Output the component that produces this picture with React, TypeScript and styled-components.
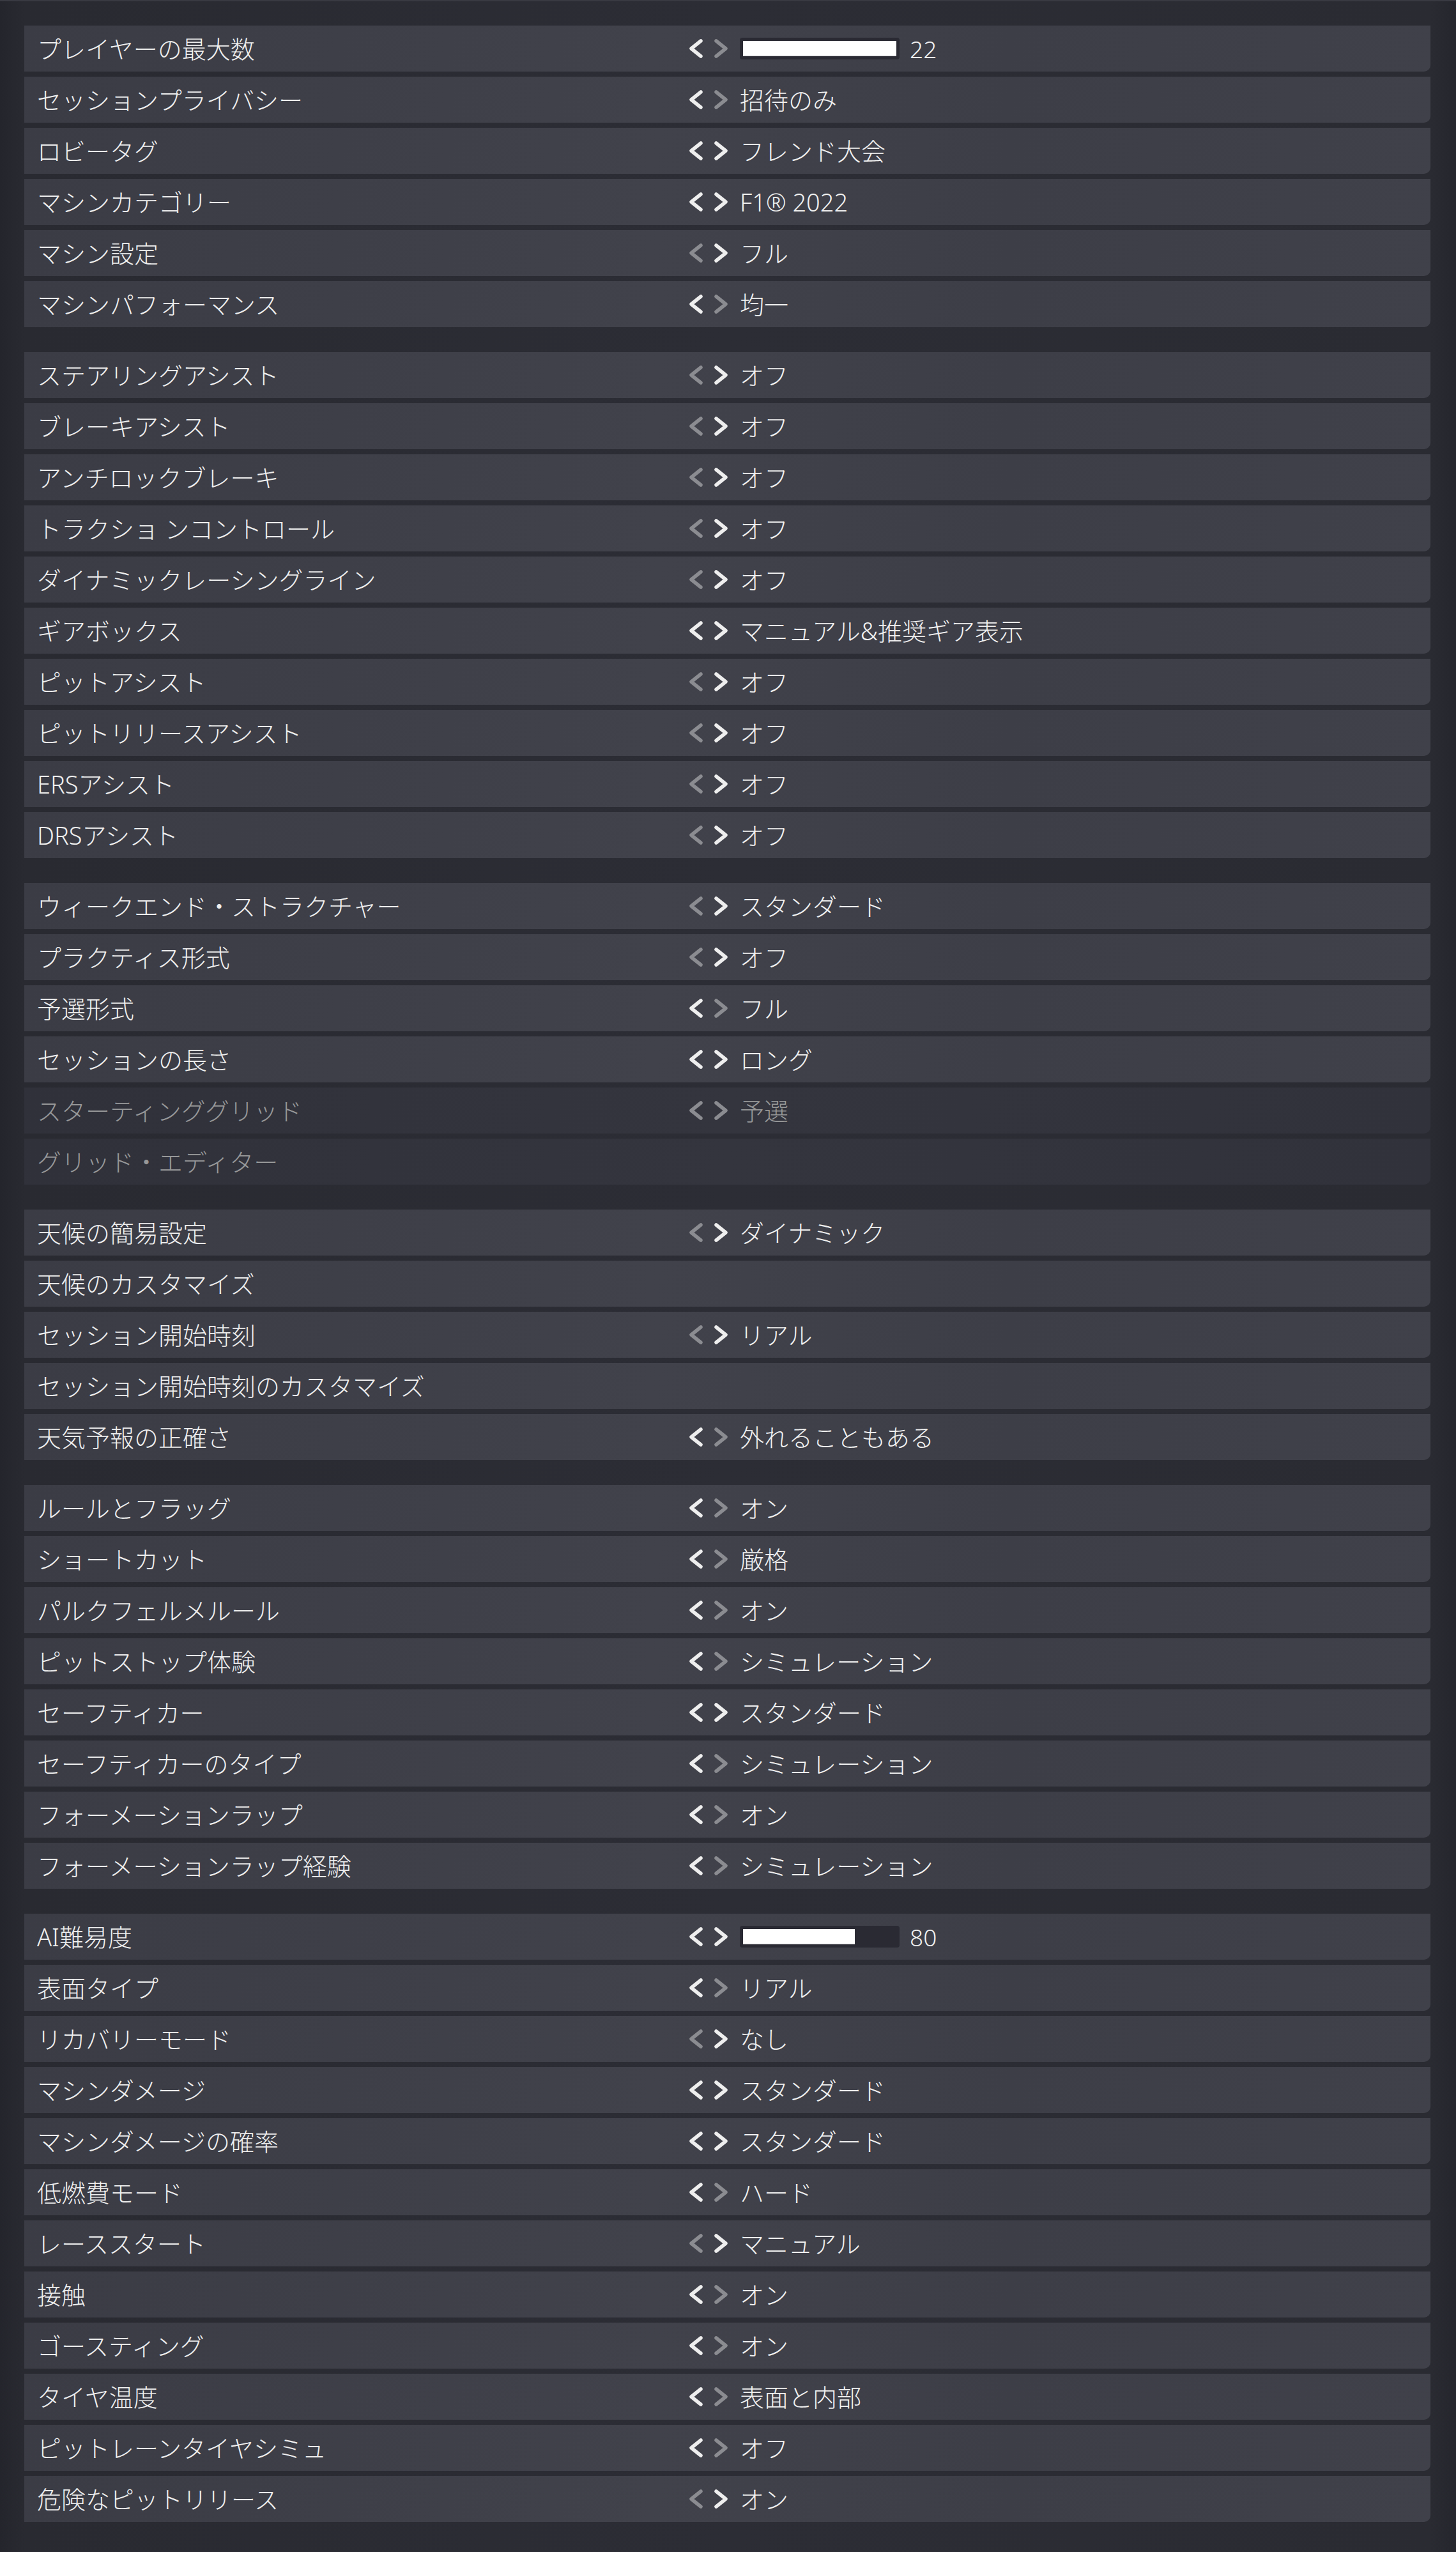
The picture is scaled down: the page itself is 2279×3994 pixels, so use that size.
import React from "react";
import styled, { createGlobalStyle } from "styled-components";

// page wide defaults
const GlobalStyle = createGlobalStyle`
  html, body {
    margin: 0;
    padding: 0;
  }
  body {
    min-height: 100vh;
    background: linear-gradient(90deg, #24252c 0px, #292a31 38px, #2c2d35 50%, #2a2b32 calc(100% - 40px), #25262d 100%);
    font-family: "Noto Sans", "Noto Sans CJK JP", sans-serif;
    font-weight: 300;
    color: #f0f0f0;
  }
`;

// whole settings list
const Page = styled.div`
  border-top: 2px solid #393a42;
  padding: 38px 40px 47px 38px;
  display: flex;
  flex-direction: column;
  gap: 39px;
`;

// one group of rows
const Section = styled.div`
  display: flex;
  flex-direction: column;
  gap: 8px;
`;

// a single setting row
const Row = styled.div<{ $disabled?: boolean }>`
  height: 72px;
  display: grid;
  grid-template-columns: 1018px 1fr;
  align-items: center;
  padding-left: 20px;
  border-radius: 0 0 10px 0;
  background: ${(p) =>
    p.$disabled
      ? "linear-gradient(100deg, #30313a 0%, #34353e 50%, #31323b 100%)"
      : "linear-gradient(100deg, #3b3c45 0%, #41424b 45%, #3d3e47 70%, #40414a 100%)"};
`;

const Label = styled.div<{ $disabled?: boolean }>`
  font-size: 38px;
  line-height: 1;
  white-space: pre;
  color: ${(p) => (p.$disabled ? "#979899" : "#efefef")};
`;

// arrows + value
const Control = styled.div`
  display: flex;
  align-items: center;
`;

const Arrows = styled.div`
  display: flex;
  align-items: center;
  gap: 14px;
  margin-right: 16px;
`;

const Chevron = styled.svg<{ $on: boolean }>`
  width: 26px;
  height: 32px;
  color: ${(p) => (p.$on ? "#eeeeee" : "#8b8c91")};
`;

const Value = styled.span<{ $disabled?: boolean }>`
  font-size: 38px;
  line-height: 1;
  white-space: nowrap;
  color: ${(p) => (p.$disabled ? "#979899" : "#f1f1f1")};
`;

// slider bar for number settings
const Track = styled.div`
  width: 250px;
  height: 34px;
  box-sizing: border-box;
  padding: 5px;
  margin-right: 16px;
  background: #2a2a33;
  border-radius: 4px;
`;

const Fill = styled.div`
  height: 100%;
  background: #ffffff;
  border-bottom: 1px solid #c9c9cc;
  box-sizing: border-box;
`;

const Number = styled.span`
  font-size: 37px;
  line-height: 1;
  color: #f1f1f1;
`;

type Setting = {
  label: string;
  value?: string;
  arrows?: string; // "LR" both lit, "L" only left lit, "R" only right lit, "" both dim
  slider?: { value: number; max: number };
  disabled?: boolean;
};

const sections: Setting[][] = [
  [
    { label: "プレイヤーの最大数", arrows: "L", slider: { value: 22, max: 22 } },
    { label: "セッションプライバシー", arrows: "L", value: "招待のみ" },
    { label: "ロビータグ", arrows: "LR", value: "フレンド大会" },
    { label: "マシンカテゴリー", arrows: "LR", value: "F1® 2022" },
    { label: "マシン設定", arrows: "R", value: "フル" },
    { label: "マシンパフォーマンス", arrows: "L", value: "均一" },
  ],
  [
    { label: "ステアリングアシスト", arrows: "R", value: "オフ" },
    { label: "ブレーキアシスト", arrows: "R", value: "オフ" },
    { label: "アンチロックブレーキ", arrows: "R", value: "オフ" },
    { label: "トラクショ ンコントロール", arrows: "R", value: "オフ" },
    { label: "ダイナミックレーシングライン", arrows: "R", value: "オフ" },
    { label: "ギアボックス", arrows: "LR", value: "マニュアル&推奨ギア表示" },
    { label: "ピットアシスト", arrows: "R", value: "オフ" },
    { label: "ピットリリースアシスト", arrows: "R", value: "オフ" },
    { label: "ERSアシスト", arrows: "R", value: "オフ" },
    { label: "DRSアシスト", arrows: "R", value: "オフ" },
  ],
  [
    { label: "ウィークエンド・ストラクチャー", arrows: "R", value: "スタンダード" },
    { label: "プラクティス形式", arrows: "R", value: "オフ" },
    { label: "予選形式", arrows: "L", value: "フル" },
    { label: "セッションの長さ", arrows: "LR", value: "ロング" },
    { label: "スターティンググリッド", arrows: "", value: "予選", disabled: true },
    { label: "グリッド・エディター", disabled: true },
  ],
  [
    { label: "天候の簡易設定", arrows: "R", value: "ダイナミック" },
    { label: "天候のカスタマイズ" },
    { label: "セッション開始時刻", arrows: "R", value: "リアル" },
    { label: "セッション開始時刻のカスタマイズ" },
    { label: "天気予報の正確さ", arrows: "L", value: "外れることもある" },
  ],
  [
    { label: "ルールとフラッグ", arrows: "L", value: "オン" },
    { label: "ショートカット", arrows: "L", value: "厳格" },
    { label: "パルクフェルメルール", arrows: "L", value: "オン" },
    { label: "ピットストップ体験", arrows: "L", value: "シミュレーション" },
    { label: "セーフティカー", arrows: "LR", value: "スタンダード" },
    { label: "セーフティカーのタイプ", arrows: "L", value: "シミュレーション" },
    { label: "フォーメーションラップ", arrows: "L", value: "オン" },
    { label: "フォーメーションラップ経験", arrows: "L", value: "シミュレーション" },
  ],
  [
    { label: "AI難易度", arrows: "LR", slider: { value: 80, max: 110 } },
    { label: "表面タイプ", arrows: "L", value: "リアル" },
    { label: "リカバリーモード", arrows: "R", value: "なし" },
    { label: "マシンダメージ", arrows: "LR", value: "スタンダード" },
    { label: "マシンダメージの確率", arrows: "LR", value: "スタンダード" },
    { label: "低燃費モード", arrows: "L", value: "ハード" },
    { label: "レーススタート", arrows: "R", value: "マニュアル" },
    { label: "接触", arrows: "L", value: "オン" },
    { label: "ゴースティング", arrows: "L", value: "オン" },
    { label: "タイヤ温度", arrows: "L", value: "表面と内部" },
    { label: "ピットレーンタイヤシミュ", arrows: "L", value: "オフ" },
    { label: "危険なピットリリース", arrows: "R", value: "オン" },
  ],
];

const Arrow = ({ dir, on }: { dir: "left" | "right"; on: boolean }) => (
  <Chevron $on={on} viewBox="0 0 26 32">
    <path
      d={dir === "left" ? "M21 4 L6 16 L21 28" : "M5 4 L20 16 L5 28"}
      fill="none"
      stroke="currentColor"
      strokeWidth={5.5}
      strokeLinecap="round"
      strokeLinejoin="round"
    />
  </Chevron>
);

const SettingRow = ({ s }: { s: Setting }) => {
  const hasControl = s.arrows !== undefined;
  return (
    <Row $disabled={s.disabled}>
      <Label $disabled={s.disabled}>{s.label}</Label>
      {hasControl && (
        <Control>
          <Arrows>
            <Arrow dir="left" on={s.arrows!.includes("L")} />
            <Arrow dir="right" on={s.arrows!.includes("R")} />
          </Arrows>
          {s.slider ? (
            <>
              <Track>
                <Fill style={{ width: `${(s.slider.value / s.slider.max) * 100}%` }} />
              </Track>
              <Number>{s.slider.value}</Number>
            </>
          ) : (
            <Value $disabled={s.disabled}>{s.value}</Value>
          )}
        </Control>
      )}
    </Row>
  );
};

const App = () => (
  <>
    <GlobalStyle />
    <Page>
      {sections.map((rows, i) => (
        <Section key={i}>
          {rows.map((s) => (
            <SettingRow key={s.label} s={s} />
          ))}
        </Section>
      ))}
    </Page>
  </>
);

export default App;
